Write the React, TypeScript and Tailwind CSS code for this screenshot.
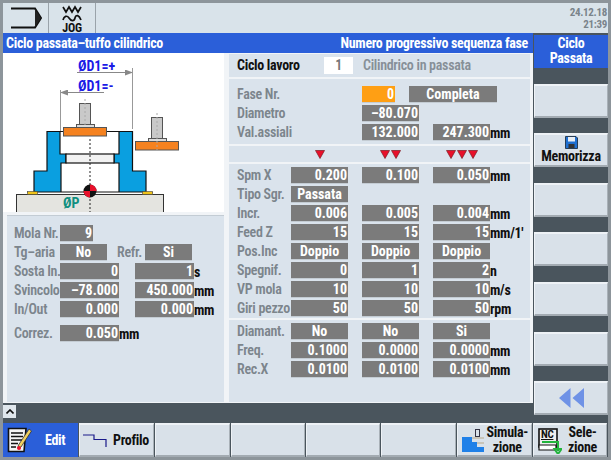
import React from 'react'

const FONT = "font-['Roboto',sans-serif] [font-stretch:75%] tracking-[-0.3px]"

function Field({ w = 'w-[57px]', v, center, orange, unit }: { w?: string; v?: string; center?: boolean; orange?: boolean; unit?: string }) {
    return (
        <div className="flex items-center h-[17px]">
            <div className={`${w} h-[17px] flex items-center leading-none text-[14px] font-bold tracking-normal text-white border-b border-[#c4ccd3] ${center ? 'justify-center' : 'justify-end pr-px'} ${orange ? 'bg-[#ff9f14]' : 'bg-[#7b7b7b]'}`}>
                {v}
            </div>
            {unit && <span className="text-[14px] font-bold text-[#101010] leading-none">{unit}</span>}
        </div>
    )
}

function Label({ w, children }: { w: string; children: React.ReactNode }) {
    return <div className={`${w} shrink-0 text-[14px] text-[#7c858c] font-semibold leading-[17px] whitespace-nowrap`}>{children}</div>
}

function Row3({ label, a, b, c, unit, center }: { label: string; a: string; b: string; c: string; unit?: string; center?: boolean }) {
    return (
        <div className="flex h-[17px] pl-2">
            <Label w="w-[54px]">{label}</Label>
            <div className="flex gap-[14px]">
                <Field v={a} center={center} />
                <Field v={b} center={center} />
                <Field v={c} center={center} unit={unit} />
            </div>
        </div>
    )
}

function Tri({ n }: { n: number }) {
    return (
        <div className="w-[57px] flex justify-center gap-px">
            {[...Array(n)].map((_, i) => (
                <svg key={i} width="10" height="9" viewBox="0 0 10 9">
                    <path d="M0.5 0.5H9.5L5 8.5Z" fill="#e8102a" stroke="#7a1a20" strokeWidth="0.7" />
                </svg>
            ))}
        </div>
    )
}

function Key({ className = '', children }: { className?: string; children?: React.ReactNode }) {
    return (
        <div className={`bg-[#d9e1e9] border-t-2 border-l border-r border-t-[#eef2f6] border-l-[#eef2f6] border-r-[#a9b1b8] border-b-2 border-b-[#a3abb2] ${className}`}>
            {children}
        </div>
    )
}

function Drawing() {
    return (
        <svg width="221" height="159" viewBox="3 53 221 159" className="block">
            <defs>
                <marker id="arr" markerWidth="8" markerHeight="6" refX="7" refY="3" orient="auto">
                    <path d="M0 0L8 3L0 6Z" fill="#888" />
                </marker>
            </defs>
            <text x="78" y="71" fontSize="14" fontWeight="700" fill="#1a1ae6" letterSpacing="0">ØD1=+</text>
            <text x="78" y="91" fontSize="14" fontWeight="700" fill="#1a1ae6" letterSpacing="0">ØD1=-</text>
            <line x1="77" y1="72.5" x2="132" y2="72.5" stroke="#888" markerEnd="url(#arr)" />
            <line x1="104" y1="92.5" x2="61" y2="92.5" stroke="#888" markerEnd="url(#arr)" />
            <line x1="132.5" y1="68" x2="132.5" y2="129" stroke="#999" />
            <line x1="60.5" y1="90" x2="60.5" y2="131" stroke="#999" />

            <path d="M47 131.5H60V154H66V163H61V192H34V171H47Z" fill="#0a9fe0" stroke="#111" strokeWidth="1.2" />
            <path d="M119 131.5H132.5V171H146V192H119V163H114V154H119Z" fill="#0a9fe0" stroke="#111" strokeWidth="1.2" />
            <line x1="60" y1="131.5" x2="119" y2="131.5" stroke="#111" strokeWidth="1" />
            <rect x="66" y="154" width="48" height="9" fill="#f2f2f2" stroke="#111" strokeWidth="1.2" />
            <line x1="61" y1="192" x2="119" y2="192" stroke="#111" strokeWidth="1.2" />

            <rect x="79.5" y="103.5" width="11" height="21" fill="#c9c9c9" stroke="#555" />
            <rect x="76.5" y="124.5" width="18" height="3" fill="#dcdcdc" stroke="#555" />
            <rect x="63.5" y="127.5" width="43" height="8.5" fill="#f58220" stroke="#555" />
            <rect x="151.5" y="117.5" width="11" height="21" fill="#c9c9c9" stroke="#555" />
            <rect x="148.5" y="138.5" width="18" height="3" fill="#dcdcdc" stroke="#555" />
            <rect x="135.5" y="141.5" width="43" height="8.5" fill="#f58220" stroke="#555" />
            <line x1="85" y1="99" x2="85" y2="127" stroke="#aaa" strokeDasharray="2 2" />
            <line x1="157" y1="113" x2="157" y2="153" stroke="#aaa" strokeDasharray="2 2" />

            <rect x="16.5" y="194.5" width="147" height="20" fill="#e4e4e0" stroke="#333" />
            <line x1="27" y1="192.5" x2="153" y2="192.5" stroke="#888" />
            <rect x="27.5" y="191.5" width="10" height="3" fill="#f0c419" stroke="#444" strokeWidth="0.6" />
            <rect x="142.5" y="191.5" width="10" height="3" fill="#f0c419" stroke="#444" strokeWidth="0.6" />
            <line x1="90" y1="139" x2="90" y2="212" stroke="#222" strokeDasharray="2 2" />
            <text x="63" y="208" fontSize="14" fontWeight="700" fill="#0f8f80" letterSpacing="0">ØP</text>
            <circle cx="90" cy="191" r="6.5" fill="#111" />
            <path d="M90 191V184.5A6.5 6.5 0 0 1 96.5 191ZM90 191V197.5A6.5 6.5 0 0 1 83.5 191Z" fill="#e8102a" />
        </svg>
    )
}

function EditIcon() {
    return (
        <svg width="25" height="28" viewBox="0 0 25 28" className="shrink-0">
            <path d="M1.5 2.5H19L17 25.5H1.5Z" fill="#f4f4f4" stroke="#111" strokeWidth="1.6" />
            <path d="M4 7H16M4 10.5H16M4 14H15M4 17.5H11M4 21H9" stroke="#111" strokeWidth="1.4" />
            <path d="M22 3L24.5 5L14 21L11 22.5L11.5 19Z" fill="#f0d060" stroke="#333" strokeWidth="0.8" />
            <circle cx="12" cy="22" r="2" fill="#e8102a" />
        </svg>
    )
}

export default function App() {
    const softkeys = [
        <div key="0" className="h-[33px] bg-[#2b5fd9] text-white text-[14px] font-bold leading-[15px] text-center pt-px">Ciclo<br />Passata</div>,
        <Key key="1" className="h-[34px]" />,
        <Key key="2" className="h-[34px] flex flex-col items-center">
            <svg width="13" height="13" viewBox="0 0 13 13" className="mt-px">
                <path d="M0.5 0.5H11L12.5 2V12.5H0.5Z" fill="#1f6fd0" stroke="#123" strokeWidth="0.8" />
                <rect x="3" y="1" width="7" height="4.5" fill="#e8eef5" />
                <rect x="3.5" y="8" width="6" height="4" fill="#333" />
            </svg>
            <span className="text-[14px] font-bold text-[#111] leading-[15px]">Memorizza</span>
        </Key>,
        <Key key="3" className="h-[34px]" />,
        <Key key="4" className="h-[34px]" />,
        <Key key="5" className="h-[34px]" />,
        <Key key="6" className="h-[34px]" />,
        <Key key="7" className="h-[34px] flex items-center justify-center">
            <svg width="27" height="22" viewBox="0 0 27 22"><path d="M12.5 1V21L1 11ZM26 1V21L14.5 11Z" fill="#6f92e6" /></svg>
        </Key>,
    ]

    return (
        <div className={`w-[611px] h-[460px] overflow-hidden bg-[#4a555d] border-y-[3px] border-x-[3px] border-[#8d959b] ${FONT}`}>
            {/* top bar */}
            <div className="h-[30px] flex bg-[#d9e3ea]">
                <div className="w-[46px] border-r border-[#9aa3aa] flex items-center justify-center">
                    <svg width="32" height="22" viewBox="0 0 32 22">
                        <path d="M1 1.5H25L31 11L25 20.5H1" fill="none" stroke="#111" strokeWidth="2" />
                        <path d="M25 2L31 11L25 20Z" fill="#222" />
                    </svg>
                </div>
                <div className="w-[47px] border-r border-[#9aa3aa] flex flex-col items-center">
                    <svg width="20" height="18" viewBox="0 0 20 18" className="mt-[2px]">
                        <path d="M1 2L4 7L7 2L10 7L13 2L16 7L19 2" fill="none" stroke="#111" strokeWidth="1.7" />
                        <path d="M1 15C2 11 5 10 7 13S12 17 13 13S17 10 19 15" fill="none" stroke="#111" strokeWidth="1.7" />
                    </svg>
                    <span className="text-[12px] font-bold text-[#111] leading-[10px]">JOG</span>
                </div>
                <div className="flex-1 text-right text-[11px] font-bold text-[#7a838b] leading-[12px] pt-[4px] pr-px">24.12.18<br />21:39</div>
            </div>

            <div className="flex h-[424px]">
                <div className="w-[530px] flex flex-col">
                    {/* title */}
                    <div className="h-[20px] bg-[#2b5fd9] flex items-center justify-between pl-[3px] pr-[5px] text-white text-[14px] font-bold">
                        <span>Ciclo passata–tuffo cilindrico</span>
                        <span>Numero progressivo sequenza fase</span>
                    </div>

                    <div className="h-[350px] flex bg-[#f1f4f7] pb-px">
                        {/* left column */}
                        <div className="w-[221px] flex flex-col">
                            <div className="h-[159px] bg-white overflow-hidden"><Drawing /></div>
                            <div className="flex-1 ml-[4px] mt-[3px] bg-[#dae3ec] border-t border-[#c3ccd4] pt-[9px] pl-[7px] flex flex-col gap-[2px]">
                                <div className="flex"><Label w="w-[46px]">Mola Nr.</Label><Field w="w-[33px]" v="9" /></div>
                                <div className="flex"><Label w="w-[46px]">Tg–aria</Label><Field w="w-[47px]" v="No" center /><Label w="w-[38px] pl-[10px]">Refr.</Label><Field w="w-[47px]" v="Si" center /></div>
                                <div className="flex gap-[16px]"><div className="flex"><Label w="w-[46px]">Sosta In.</Label><Field w="w-[59px]" v="0" /></div><Field w="w-[59px]" v="1" unit="s" /></div>
                                <div className="flex gap-[16px]"><div className="flex"><Label w="w-[46px]">Svincolo</Label><Field w="w-[59px]" v="–78.000" /></div><Field w="w-[59px]" v="450.000" unit="mm" /></div>
                                <div className="flex gap-[16px]"><div className="flex"><Label w="w-[46px]">In/Out</Label><Field w="w-[59px]" v="0.000" /></div><Field w="w-[59px]" v="0.000" unit="mm" /></div>
                                <div className="flex mt-[5px]"><Label w="w-[46px]">Correz.</Label><Field w="w-[59px]" v="0.050" unit="mm" /></div>
                            </div>
                        </div>

                        {/* right column */}
                        <div className="ml-[5px] w-[301px] flex flex-col gap-[2px] pt-px">
                            <div className="h-[23px] bg-[#dae3ec] flex items-center pl-2">
                                <div className="w-[87px] text-[14px] font-bold text-[#111]">Ciclo lavoro</div>
                                <div className="w-[29px] h-[17px] bg-white text-center text-[14px] font-semibold leading-[17px] text-[#777]">1</div>
                                <div className="ml-[10px] text-[14px] font-semibold text-[#868f97]">Cilindrico in passata</div>
                            </div>
                            <div className="h-[65px] bg-[#dae3ec] pt-[7px] flex flex-col gap-[2px]">
                                <div className="flex pl-2"><Label w="w-[125px]">Fase Nr.</Label><Field w="w-[33px]" v="0" orange /><div className="ml-[14px]"><Field w="w-[88px]" v="Completa" center /></div></div>
                                <div className="flex pl-2"><Label w="w-[125px]">Diametro</Label><Field v="–80.070" /></div>
                                <div className="flex pl-2 gap-[14px]"><Label w="w-[111px]">Val.assiali</Label><Field v="132.000" /><Field v="247.300" unit="mm" /></div>
                            </div>
                            <div className="h-[16px] bg-[#dae3ec] flex items-center gap-[14px] pl-[62px]"><Tri n={1} /><Tri n={2} /><Tri n={3} /></div>
                            <div className="h-[154px] bg-[#dae3ec] pt-[3px] flex flex-col gap-[2px]">
                                <Row3 label="Spm X" a="0.200" b="0.100" c="0.050" unit="mm" />
                                <div className="flex pl-2"><Label w="w-[54px]">Tipo Sgr.</Label><Field v="Passata" center /></div>
                                <Row3 label="Incr." a="0.006" b="0.005" c="0.004" unit="mm" />
                                <Row3 label="Feed Z" a="15" b="15" c="15" unit="mm/1'" />
                                <Row3 label="Pos.Inc" a="Doppio" b="Doppio" c="Doppio" center />
                                <Row3 label="Spegnif." a="0" b="1" c="2" unit="n" />
                                <Row3 label="VP mola" a="10" b="10" c="10" unit="m/s" />
                                <Row3 label="Giri pezzo" a="50" b="50" c="50" unit="rpm" />
                            </div>
                            <div className="flex-1 bg-[#dae3ec] pt-[3px] flex flex-col gap-[2px]">
                                <Row3 label="Diamant." a="No" b="No" c="Si" center />
                                <Row3 label="Freq." a="0.1000" b="0.0000" c="0.0000" unit="mm" />
                                <Row3 label="Rec.X" a="0.0100" b="0.0100" c="0.0100" unit="mm" />
                            </div>
                        </div>
                    </div>

                    {/* scroll strip */}
                    <div className="h-[20px] pt-[2px]">
                        <div className="w-[13px] h-[13px] bg-[#dfe6ec] flex items-center justify-center">
                            <svg width="8" height="5" viewBox="0 0 8 5"><path d="M0.5 4.5L4 1L7.5 4.5" fill="none" stroke="#111" strokeWidth="1.6" /></svg>
                        </div>
                    </div>
                </div>

                {/* right softkeys */}
                <div className="ml-px w-[74px] flex flex-col gap-[15.6px] pt-[2px]">{softkeys}</div>
            </div>

            {/* bottom softkeys */}
            <div className="h-[34px] flex gap-px -mt-[34px]">
                <div className="w-[75px] bg-[#2b5fd9] flex items-center pl-[4px] text-white text-[14px] font-bold gap-[13px]"><EditIcon /><span>Edit</span></div>
                <Key className="w-[75px] flex items-center text-[14px] font-bold text-[#111] pl-[3px] gap-[6px]">
                    <svg width="24" height="14" viewBox="0 0 24 14"><path d="M0 2H11V6.5H23V14" fill="none" stroke="#1a1a8a" strokeWidth="1.2" /></svg>
                    <span>Profilo</span>
                </Key>
                <Key className="w-[75px]" />
                <Key className="w-[74px]" />
                <Key className="w-[74px]" />
                <Key className="w-[75px]" />
                <Key className="w-[75px] flex justify-between pl-[4px] pr-[3px]">
                    <svg width="22" height="26" viewBox="0 0 22 26" className="mt-px">
                        <rect x="13.5" y="3.5" width="4" height="7" fill="none" stroke="#334" strokeWidth="1" />
                        <path d="M10 12H22M15 17H22" stroke="#b8a888" strokeWidth="1.2" />
                        <path d="M0 11H10V16H15V21H22V26H0Z" fill="#1f80e8" />
                    </svg>
                    <span className="text-[14px] font-bold text-[#111] leading-[15px] text-center">Simula-<br />zione</span>
                </Key>
                <Key className="w-[74px] flex justify-between pl-[4px] pr-[9px]">
                    <div className="relative w-[24px] h-[26px] mt-[3px]">
                        <svg width="24" height="26" viewBox="0 0 24 26">
                            <rect x="1" y="1" width="18" height="18" fill="#eee" stroke="#111" strokeWidth="1.6" />
                            <path d="M1 17H18V22H1Z" fill="#fff" stroke="#111" strokeWidth="1.2" />
                            <path d="M4 14H20V23M16.5 21H23.5L20 26Z" fill="none" stroke="#22b43c" strokeWidth="2" />
                        </svg>
                        <span className="absolute left-[3px] top-[1px] text-[11px] font-bold text-[#111] leading-[12px] underline">NC</span>
                    </div>
                    <span className="text-[14px] font-bold text-[#111] leading-[15px] text-center">Sele-<br />zione</span>
                </Key>
            </div>
        </div>
    )
}
